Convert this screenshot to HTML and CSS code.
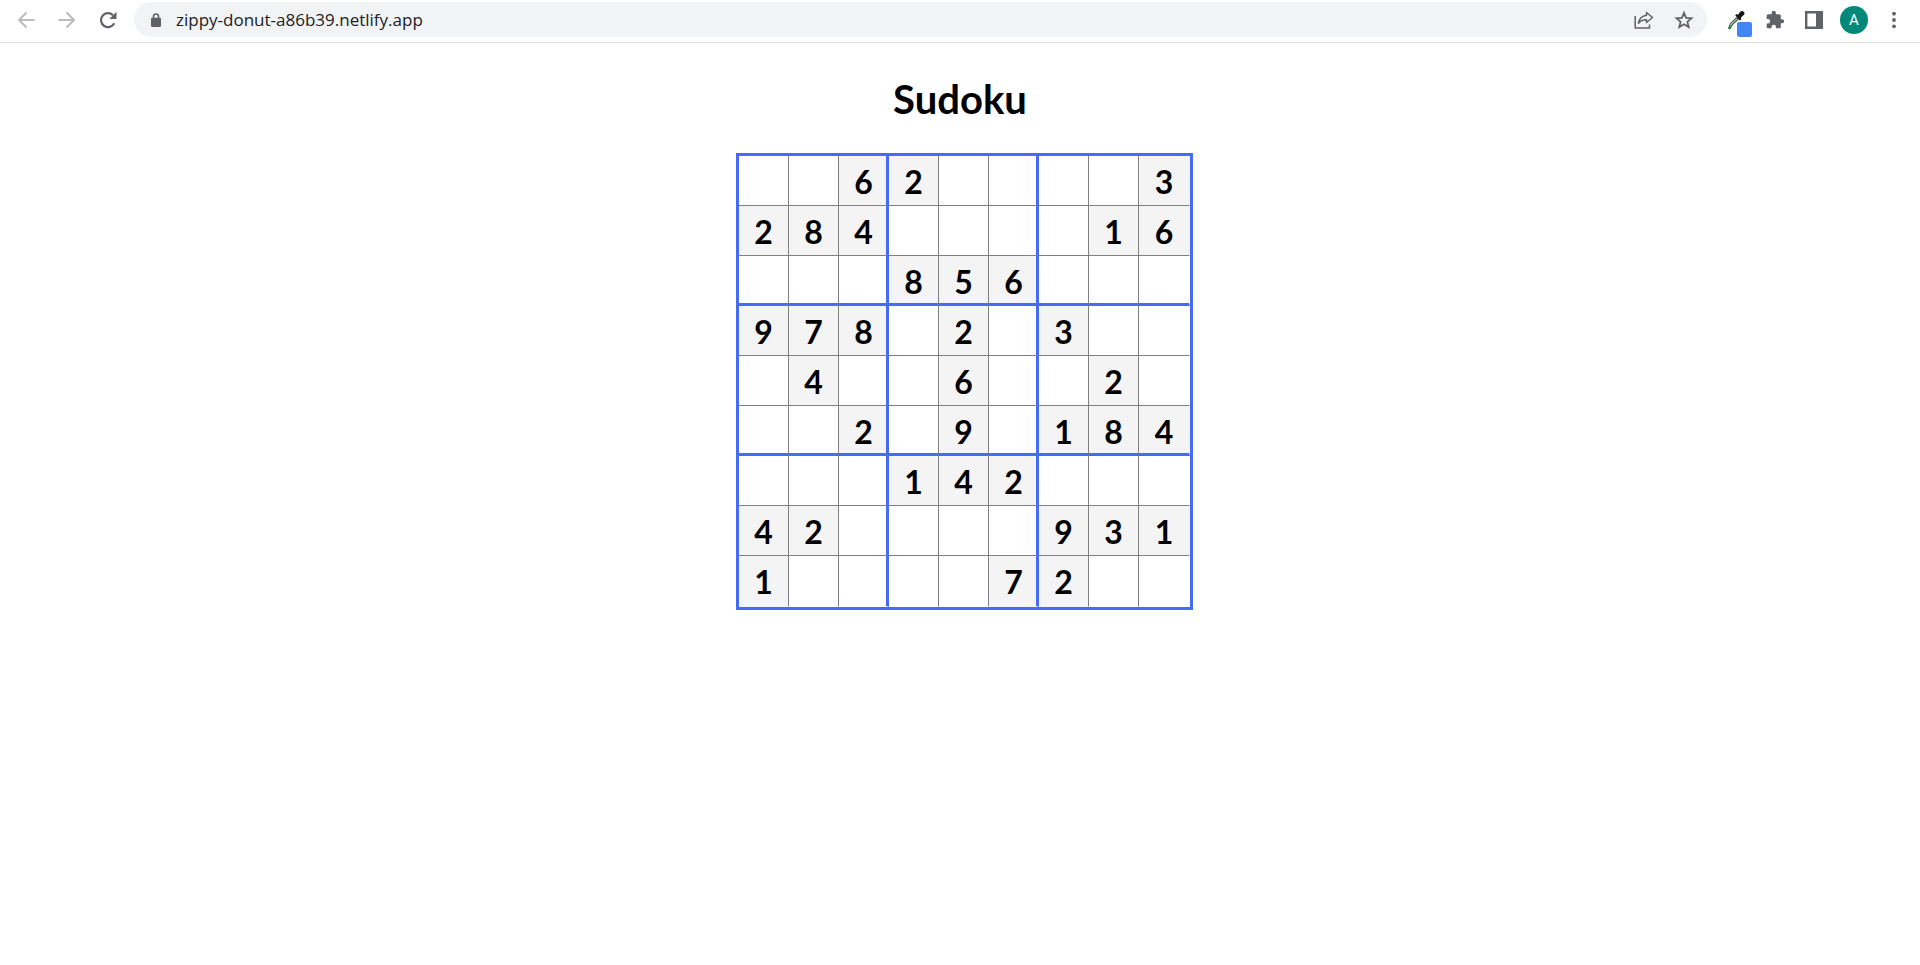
FILE: index.html
```html
<!DOCTYPE html>
<html lang="en">
<head>
<meta charset="utf-8">
<title>Sudoku</title>
<link rel="stylesheet" href="styles.css">
</head>
<body>
<header class="toolbar">
  <nav class="nav" aria-label="Navigation">
    <button class="icon-button faded" type="button" aria-label="Back">
      <svg viewBox="0 0 20 20" fill="none" stroke="currentColor" stroke-width="2"><path d="M18.500 10H3M10.500 2.500L3 10l7.500 7.500"/></svg>
    </button>
    <button class="icon-button faded" type="button" aria-label="Forward">
      <svg viewBox="0 0 20 20" fill="none" stroke="currentColor" stroke-width="2"><path d="M1.500 10H17M9.500 2.500L17 10l-7.500 7.500"/></svg>
    </button>
    <button class="icon-button" type="button" aria-label="Reload">
      <svg viewBox="0 0 20 20"><path d="M16.300 13.200A7 7 0 1 1 15 5.200" fill="none" stroke="currentColor" stroke-width="2.200"/><path d="M18.500 1.800V9h-7.200z" fill="currentColor"/></svg>
    </button>
  </nav>
  <div class="address-bar">
    <svg class="lock" viewBox="0 0 12 16" aria-hidden="true"><path d="M3.500 7V4.500a2.500 2.500 0 0 1 5 0V7" fill="none" stroke="currentColor" stroke-width="1.600"/><rect x="1" y="5.800" width="10" height="9.200" rx="1.200" fill="currentColor"/></svg>
    <input class="address" type="text" value="zippy-donut-a86b39.netlify.app" aria-label="Address">
    <button class="icon-button" type="button" aria-label="Share">
      <svg viewBox="0 0 20 20" fill="none" stroke="currentColor" stroke-width="1.500"><path d="M1.200 6v12h14.300v-3.500"/><path d="M12.500 2.500l6 5-6 5V9.800c-3.500-.1-6 1-8 3.400.6-4.200 3-7.200 8-8z" stroke-linejoin="round"/></svg>
    </button>
    <button class="icon-button" type="button" aria-label="Bookmark">
      <svg viewBox="0 0 20 20" fill="none" stroke="currentColor" stroke-width="1.800"><path d="M10 2.800l2.100 5 5.400.5-4.100 3.500 1.300 5.300-4.700-2.900-4.700 2.900 1.300-5.300-4.100-3.500 5.400-.5z"/></svg>
    </button>
  </div>
  <div class="extensions">
    <button class="icon-button picker" type="button" aria-label="Color picker">
      <svg viewBox="0 0 20 20"><path d="M3 18c-.4-3 .6-4.500 2.500-6.300l5.200-4.900 2.400 2.400-5.200 4.700C6.300 15.500 5.500 17 4.800 18.500z" fill="#4d6a50"/><path d="M4.500 15.500c.8-1.800 4.800-5.500 6.500-6.700" fill="none" stroke="#dce6dc" stroke-width="1"/><path d="M9.200 5.200l1.500-1.300 1.300.8 2.200-3c1.300-1.500 4.500-.6 4.300 1.700-.1 1.800-2.200 2.500-3.600 4l.4 1.800-1.400 1.300z" fill="#161616"/><circle cx="3.500" cy="18" r="1.400" fill="#2f7d3c"/></svg>
      <span class="swatch"></span>
    </button>
    <button class="icon-button" type="button" aria-label="Extensions">
      <svg viewBox="0 0 24 24" fill="currentColor"><path d="M20.500 11H19V7c0-1.100-.9-2-2-2h-4V3.500a2.500 2.500 0 0 0-5 0V5H4c-1.100 0-2 .9-2 2v3.800h1.500a2.700 2.700 0 0 1 0 5.400H2V20c0 1.100.9 2 2 2h3.800v-1.500a2.700 2.700 0 0 1 5.400 0V22H17c1.100 0 2-.9 2-2v-4h1.500a2.500 2.500 0 0 0 0-5z"/></svg>
    </button>
    <button class="icon-button" type="button" aria-label="Side panel">
      <svg viewBox="0 0 20 20"><path d="M1 1h18v18H1zM3.400 3.400v13.200h8.600V3.400z" fill="currentColor" fill-rule="evenodd"/></svg>
    </button>
    <button class="avatar" type="button">A</button>
    <button class="icon-button" type="button" aria-label="Menu">
      <svg viewBox="0 0 20 20" fill="currentColor"><circle cx="10" cy="3.700" r="1.900"/><circle cx="10" cy="10" r="1.900"/><circle cx="10" cy="16.300" r="1.900"/></svg>
    </button>
  </div>
</header>
<main class="game">
  <h1 class="title">Sudoku</h1>
  <table class="board">
    <tbody>
      <tr><td></td><td></td><td class="given">6</td><td class="given">2</td><td></td><td></td><td></td><td></td><td class="given">3</td></tr>
      <tr><td class="given">2</td><td class="given">8</td><td class="given">4</td><td></td><td></td><td></td><td></td><td class="given">1</td><td class="given">6</td></tr>
      <tr><td></td><td></td><td></td><td class="given">8</td><td class="given">5</td><td class="given">6</td><td></td><td></td><td></td></tr>
      <tr><td class="given">9</td><td class="given">7</td><td class="given">8</td><td></td><td class="given">2</td><td></td><td class="given">3</td><td></td><td></td></tr>
      <tr><td></td><td class="given">4</td><td></td><td></td><td class="given">6</td><td></td><td></td><td class="given">2</td><td></td></tr>
      <tr><td></td><td></td><td class="given">2</td><td></td><td class="given">9</td><td></td><td class="given">1</td><td class="given">8</td><td class="given">4</td></tr>
      <tr><td></td><td></td><td></td><td class="given">1</td><td class="given">4</td><td class="given">2</td><td></td><td></td><td></td></tr>
      <tr><td class="given">4</td><td class="given">2</td><td></td><td></td><td></td><td></td><td class="given">9</td><td class="given">3</td><td class="given">1</td></tr>
      <tr><td class="given">1</td><td></td><td></td><td></td><td></td><td class="given">7</td><td class="given">2</td><td></td><td></td></tr>
    </tbody>
  </table>
</main>
</body>
</html>
```
FILE: styles.css
```css
* {
  box-sizing: border-box;
}

body {
  margin: 0;
  background: #fff;
  color: #000;
  font-family: "Comic Sans MS", Lato, sans-serif;
}

button {
  padding: 0;
  border: 0;
  background: none;
  color: inherit;
  font: inherit;
}

.toolbar {
  display: flex;
  align-items: center;
  gap: 16px;
  padding: 2px 16px 5px;
  border-bottom: 1px solid #dadce0;
  color: #5f6368;
}

.nav {
  display: flex;
  gap: 21px;
}

.icon-button {
  display: block;
  width: 20px;
  height: 20px;
  flex: none;
}

.icon-button svg {
  display: block;
  width: 20px;
  height: 20px;
}

.faded {
  color: #babcbe;
}

.address-bar {
  display: flex;
  flex: 1;
  align-items: center;
  gap: 20px;
  height: 35px;
  padding: 0 13px 0 16px;
  border-radius: 18px;
  background: #f1f3f4;
}

.lock {
  width: 12px;
  height: 16px;
  flex: none;
}

.address {
  flex: 1;
  min-width: 0;
  margin-left: -6px;
  padding: 0;
  border: 0;
  background: none;
  color: #202124;
  font: 17px "Open Sans", sans-serif;
}

.extensions {
  display: flex;
  align-items: center;
  gap: 19px;
  padding-left: 3px;
}

.picker {
  position: relative;
}

.swatch {
  position: absolute;
  top: 12px;
  left: 11px;
  width: 15px;
  height: 15px;
  border-radius: 2px;
  background: #4285f4;
}

.avatar {
  width: 28px;
  height: 28px;
  margin: 0 -3px;
  border-radius: 50%;
  background: #00897b;
  color: #fff;
  font: 15px Roboto, sans-serif;
}

.game {
  width: 448px;
  margin: 0 auto;
  padding-top: 28px;
}

.title {
  margin: 0 0 26px;
  font-size: 40px;
  line-height: 56px;
  text-align: center;
}

.board {
  border: 3px solid #466bf8;
  border-spacing: 0;
}

.board td {
  min-width: 50px;
  height: 50px;
  padding: 2px 0 0;
  border-right: 1px solid #808080;
  border-bottom: 1px solid #808080;
  font-size: 32px;
  font-weight: 700;
  line-height: 40px;
  text-align: center;
}

.board .given {
  background: #f4f4f4;
}

.board td:nth-child(3n) {
  padding-left: 2px;
  border-right: 3px solid #466bf8;
}

.board tr:nth-child(3n) td {
  padding-top: 4px;
  border-bottom: 3px solid #466bf8;
}

.board td:last-child {
  min-width: 51px;
  padding-left: 0;
  border-right: 1px solid transparent;
}

.board tr:last-child td {
  height: 51px;
  padding-top: 2px;
  border-bottom: 1px solid transparent;
}
```
